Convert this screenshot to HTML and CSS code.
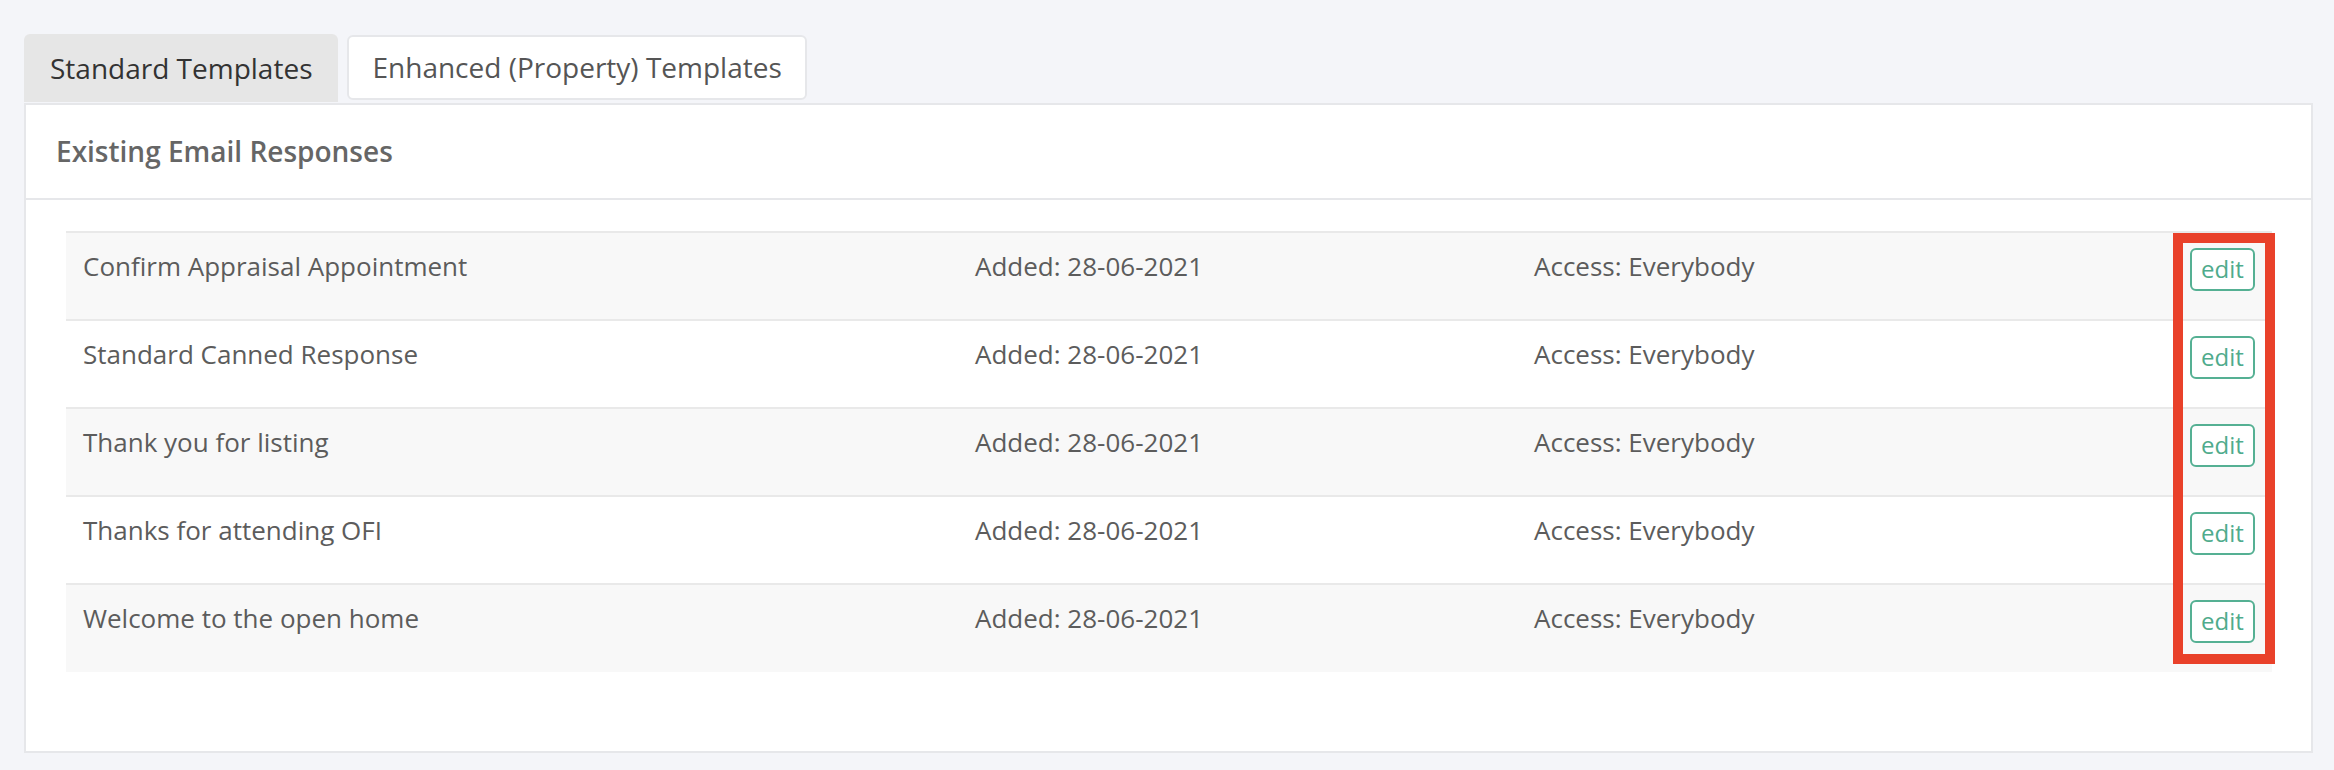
FILE: index.html
```html
<html lang="en">
<head>
  <title>Email Responses</title>
  <link rel="stylesheet" href="styles.css">
</head>
<body>
  <div class="page">
    <nav class="tabs">
      <a class="tab active" href="#">Standard Templates</a>
      <a class="tab" href="#">Enhanced (Property) Templates</a>
    </nav>
    <section class="panel">
      <div class="panel-header">Existing Email Responses</div>
      <div class="panel-body">
        <div class="table-wrap">
          <table class="responses">
            <tr>
              <td class="col-name">Confirm Appraisal Appointment</td>
              <td class="col-date">Added: 28-06-2021</td>
              <td class="col-access">Access: Everybody</td>
              <td class="col-edit"><a class="btn-edit" href="#">edit</a></td>
            </tr>
            <tr>
              <td class="col-name">Standard Canned Response</td>
              <td class="col-date">Added: 28-06-2021</td>
              <td class="col-access">Access: Everybody</td>
              <td class="col-edit"><a class="btn-edit" href="#">edit</a></td>
            </tr>
            <tr>
              <td class="col-name">Thank you for listing</td>
              <td class="col-date">Added: 28-06-2021</td>
              <td class="col-access">Access: Everybody</td>
              <td class="col-edit"><a class="btn-edit" href="#">edit</a></td>
            </tr>
            <tr>
              <td class="col-name">Thanks for attending OFI</td>
              <td class="col-date">Added: 28-06-2021</td>
              <td class="col-access">Access: Everybody</td>
              <td class="col-edit"><a class="btn-edit" href="#">edit</a></td>
            </tr>
            <tr>
              <td class="col-name">Welcome to the open home</td>
              <td class="col-date">Added: 28-06-2021</td>
              <td class="col-access">Access: Everybody</td>
              <td class="col-edit"><a class="btn-edit" href="#">edit</a></td>
            </tr>
          </table>
          <div class="highlight-box"></div>
        </div>
      </div>
    </section>
  </div>
</body>
</html>
```

FILE: styles.css
```css
body {
  margin: 0;
  background-color: #f4f5f9;
  font-family: "Open Sans", "Noto Sans", sans-serif;
  color: #5a5a5a;
}

a {
  text-decoration: none;
}

.page {
  padding: 34px 21px 0 24px;
}

/* tabs */
.tabs {
  display: flex;
  gap: 9px;
  margin-bottom: 1px;
}

.tab {
  display: block;
  margin-top: 1px;
  height: 65px;
  line-height: 61px;
  padding: 0 23px;
  font-size: 28px;
  color: #555;
  background-color: #fff;
  border: 2px solid #e6e7ea;
  border-radius: 6px;
  box-sizing: border-box;
}

.tab.active {
  margin-top: 0;
  height: 68px;
  line-height: 68px;
  padding: 0 26px;
  background-color: #e6e6e6;
  border: 0;
  border-radius: 6px 6px 0 0;
  color: #333;
}

/* panel */
.panel {
  background-color: #fff;
  border: 2px solid #e6e7ea;
}

.panel-header {
  height: 93px;
  line-height: 93px;
  padding: 0 30px;
  font-size: 28px;
  font-weight: 600;
  color: #666;
  border-bottom: 2px solid #e6e7ea;
}

.panel-body {
  padding: 31px 39px 79px 40px;
}

.table-wrap {
  position: relative;
}

.responses {
  width: 100%;
  border-collapse: collapse;
  table-layout: fixed;
  font-size: 26px;
}

.responses tr {
  height: 88px;
}

.responses tr:nth-child(odd) {
  background-color: #f8f8f8;
}

.responses td {
  border-top: 2px solid #e9e9e9;
  padding: 15px 17px 0;
  vertical-align: top;
  color: #5c5c5c;
  white-space: nowrap;
}

.col-name { width: 858px; }
.col-date { width: 525px; }
.col-access { width: 622px; }
.col-edit { width: 65px; }

.btn-edit {
  display: block;
  width: 65px;
  height: 43px;
  box-sizing: border-box;
  border: 2px solid #55b093;
  border-radius: 6px;
  background-color: #fff;
  color: #4fab8c;
  font-size: 24px;
  line-height: 37px;
  text-align: center;
}

/* annotation box over the edit column */
.highlight-box {
  position: absolute;
  top: 2px;
  right: -3px;
  width: 102px;
  height: 431px;
  box-sizing: border-box;
  border: 10px solid #e9412a;
}
```
